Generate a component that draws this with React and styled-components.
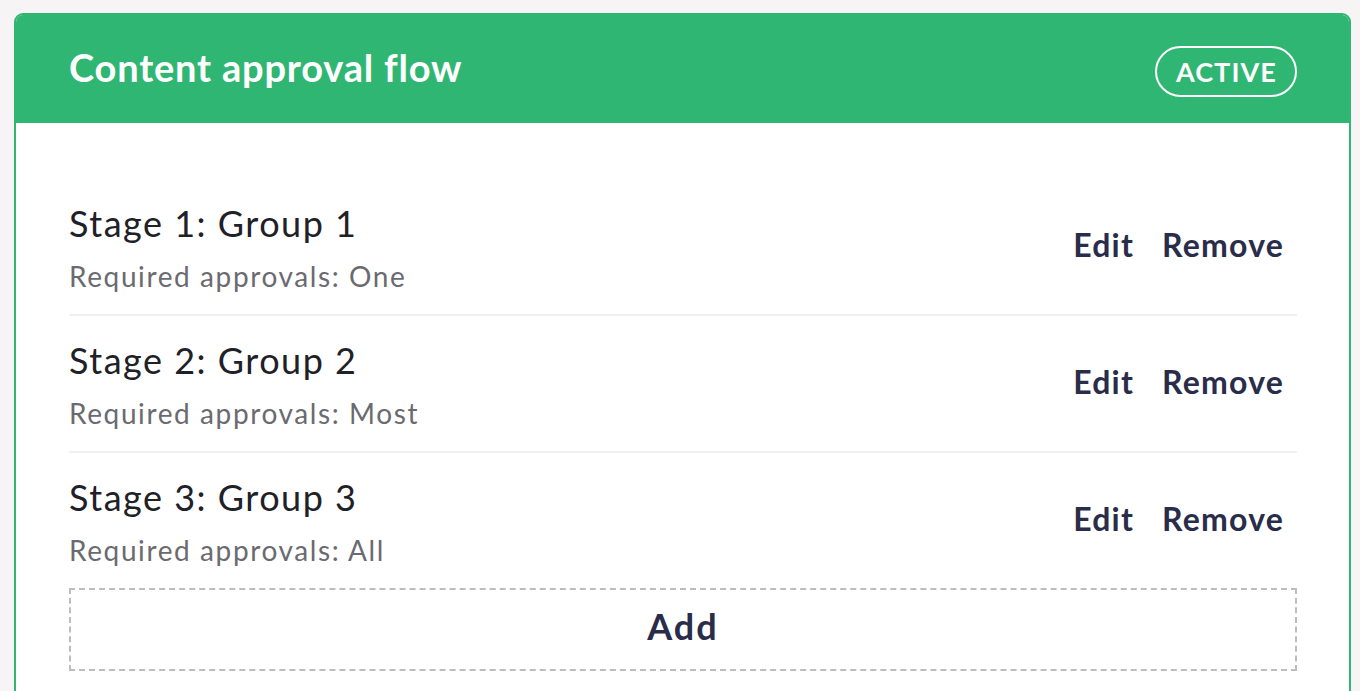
import styled, { createGlobalStyle } from 'styled-components'

const GlobalStyle = createGlobalStyle`
  html, body {
    margin: 0;
    padding: 0;
    background: #f7f4f6;
    font-family: Lato, "Open Sans", sans-serif;
  }
`

const stages = [
  { name: 'Stage 1: Group 1', approvals: 'One' },
  { name: 'Stage 2: Group 2', approvals: 'Most' },
  { name: 'Stage 3: Group 3', approvals: 'All' },
]

const Page = styled.div`
  padding: 13px 9px 0 14px;
`

const Card = styled.section`
  border: 2px solid #30b673;
  border-radius: 9px 9px 0 0;
  background: #fff;
  overflow: hidden;
`

const Header = styled.header`
  height: 108px;
  background: #30b673;
  display: flex;
  align-items: center;
  justify-content: space-between;
  padding: 0 52px 0 53px;
  box-sizing: border-box;
`

const Title = styled.h1`
  margin: 0 0 4px;
  color: #fff;
  font-size: 38px;
  font-weight: 700;
  letter-spacing: 0.8px;
`

const Badge = styled.span`
  display: inline-flex;
  align-items: center;
  justify-content: center;
  height: 51px;
  padding: 0 18px 0 19px;
  box-sizing: border-box;
  border: 2px solid #fff;
  border-radius: 26px;
  color: #fff;
  font-size: 27px;
  font-weight: 700;
  letter-spacing: 1.1px;
  margin-top: 5px;
`

const Body = styled.div`
  padding: 56px 52px 20px 53px;
`

const Row = styled.div`
  display: flex;
  align-items: center;
  justify-content: space-between;
  padding: 23px 0 21px;
  border-bottom: ${p => (p.$last ? 'none' : '2px solid #f0eff1')};
`

const StageName = styled.div`
  font-size: 36px;
  line-height: 42px;
  letter-spacing: 1.5px;
  color: #1f2128;
`

const Approvals = styled.div`
  font-size: 28px;
  line-height: 34px;
  letter-spacing: 1.6px;
  color: #6a6a70;
  margin-top: 15px;
`

const Actions = styled.div`
  display: flex;
  gap: 28px;
  padding-right: 13px;
  margin-bottom: 7px;
`

const Action = styled.button`
  border: none;
  background: none;
  padding: 0;
  font-family: inherit;
  font-size: 32px;
  font-weight: 700;
  letter-spacing: 1.2px;
  color: #2a2d4a;
  cursor: pointer;
`

const AddButton = styled.button`
  display: block;
  width: 100%;
  height: 83px;
  margin-top: 0;
  padding: 0 0 7px;
  border: 2px dashed #bdbdbd;
  background: #fff;
  font-family: inherit;
  font-size: 36px;
  font-weight: 700;
  letter-spacing: 2px;
  color: #2a2d4a;
  cursor: pointer;
`

export default function App() {
  return (
    <Page>
      <GlobalStyle />
      <Card>
        <Header>
          <Title>Content approval flow</Title>
          <Badge>ACTIVE</Badge>
        </Header>
        <Body>
          {stages.map((s, i) => (
            <Row key={s.name} $last={i === stages.length - 1}>
              <div>
                <StageName>{s.name}</StageName>
                <Approvals>Required approvals: {s.approvals}</Approvals>
              </div>
              <Actions>
                <Action>Edit</Action>
                <Action>Remove</Action>
              </Actions>
            </Row>
          ))}
          <AddButton>Add</AddButton>
        </Body>
      </Card>
    </Page>
  )
}
